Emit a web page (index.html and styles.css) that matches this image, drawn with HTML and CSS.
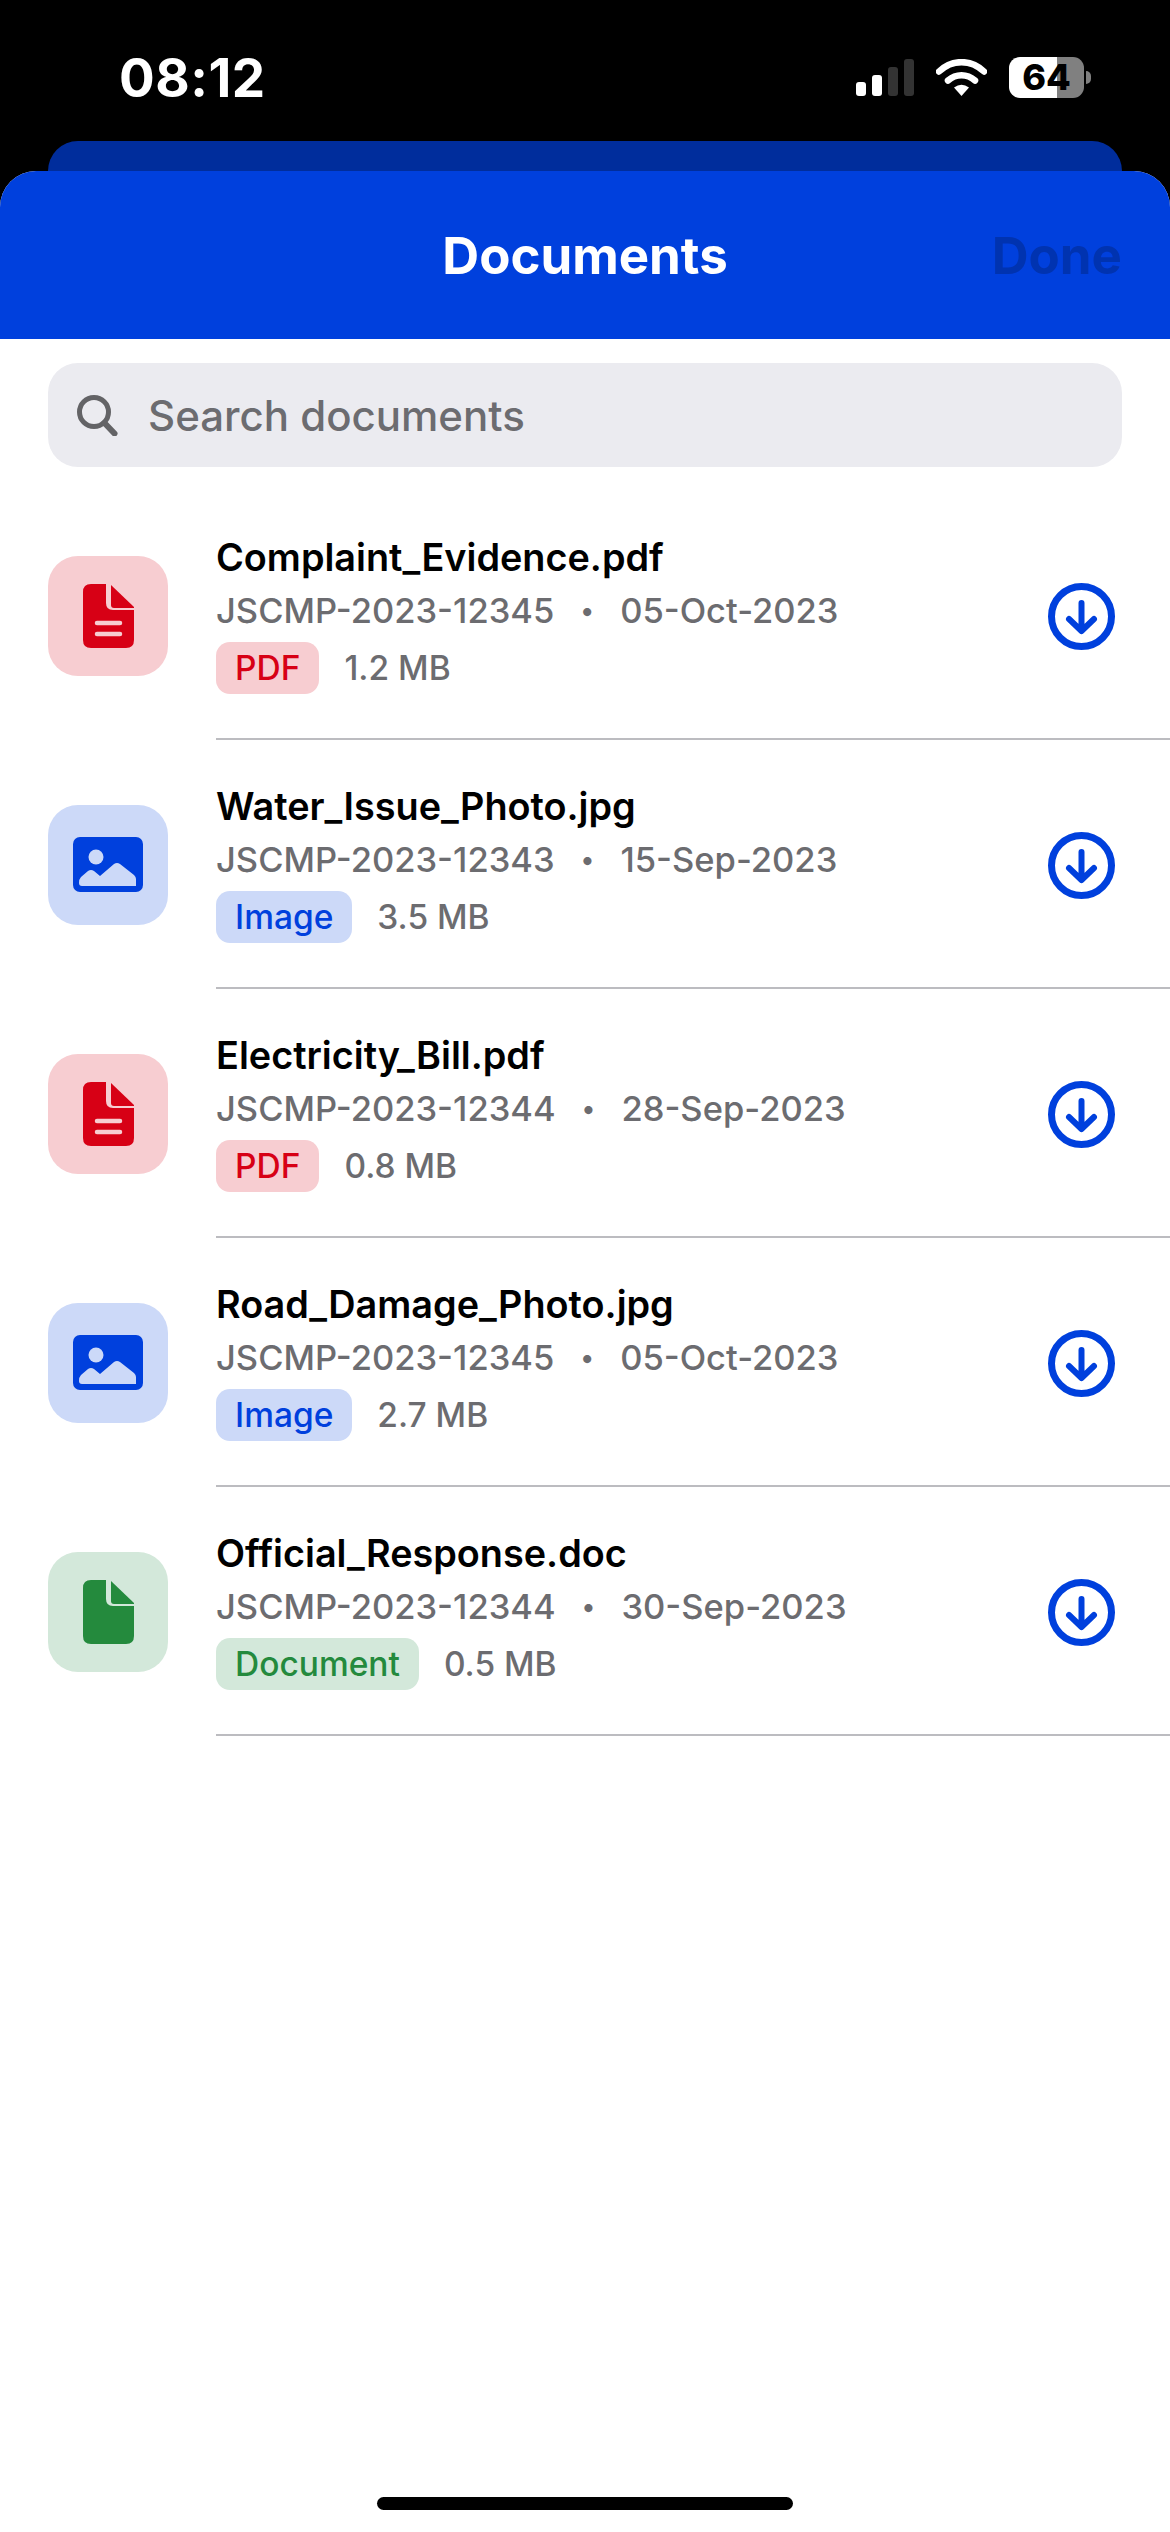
FILE: index.html
```html
<!DOCTYPE html>
<html lang="en">
<head>
    <meta charset="UTF-8">
    <meta name="viewport" content="width=device-width, initial-scale=1.0">
    <title>Documents</title>
    <link rel="stylesheet" href="styles.css">
</head>
<body>

    <!-- Status bar -->
    <div class="status-bar">
        <span class="time">08:12</span>
        <div class="status-icons">
            <div class="signal">
                <span class="bar bar-1"></span>
                <span class="bar bar-2"></span>
                <span class="bar bar-3"></span>
                <span class="bar bar-4"></span>
            </div>
            <svg class="wifi" viewBox="0 0 51 37">
                <path d="M3 12.5C16 0 35 0 48 12.5" fill="none" stroke="#fff" stroke-width="6.5" stroke-linecap="round"/>
                <path d="M12 21.5C20 14.5 31 14.5 39 21.5" fill="none" stroke="#fff" stroke-width="6.5" stroke-linecap="round"/>
                <path d="M18 28.5Q25.500 23 33 28.5L25.500 37Z" fill="#fff"/>
            </svg>
            <div class="battery"><span>64</span></div>
            <span class="battery-nub"></span>
        </div>
    </div>

    <div class="back-sheet"></div>

    <div class="sheet">
        <header>
            <h1>Documents</h1>
            <a href="#" class="done">Done</a>
        </header>

        <main>
            <div class="search">
                <svg class="search-icon" viewBox="0 0 41 41">
                    <circle cx="17" cy="17" r="14.500" fill="none" stroke="#636366" stroke-width="5"/>
                    <path d="M27.500 28L37.500 38.500" fill="none" stroke="#636366" stroke-width="6" stroke-linecap="round"/>
                </svg>
                <span>Search documents</span>
            </div>

            <div class="doc-list">
                <!-- Complaint evidence -->
                <div class="doc">
                    <div class="doc-icon pdf">
                        <svg class="file-icon" viewBox="0 0 51 64">
                            <path d="M8 0H23V19Q23 26 30 26H51V56Q51 64 43 64H8Q0 64 0 56V8Q0 0 8 0Z" fill="#d70015"/>
                            <path d="M28 1L51 23V24H31Q28 24 28 21Z" fill="#d70015"/>
                            <path d="M14 39H37M14 50H37" stroke="#f7cdd1" stroke-width="4.500" stroke-linecap="round"/>
                        </svg>
                    </div>
                    <div class="doc-info">
                        <div class="doc-name">Complaint_Evidence.pdf</div>
                        <div class="doc-meta"><span>JSCMP-2023-12345</span><span class="dot">•</span><span>05-Oct-2023</span></div>
                        <div class="doc-tags"><span class="tag pdf">PDF</span><span>1.2 MB</span></div>
                    </div>
                    <svg class="download" viewBox="0 0 67 67">
                        <circle cx="33.500" cy="33.500" r="30" fill="none" stroke="#0040dd" stroke-width="7"/>
                        <path d="M33.500 20V47M21 36L33.500 48L46 36" fill="none" stroke="#0040dd" stroke-width="6" stroke-linecap="round" stroke-linejoin="round"/>
                    </svg>
                </div>

                <!-- Water issue -->
                <div class="doc">
                    <div class="doc-icon image">
                        <svg class="photo-icon" viewBox="0 0 70 55">
                            <rect width="70" height="55" rx="7" fill="#0040dd"/>
                            <circle cx="23" cy="20" r="7.500" fill="#ccd9f8"/>
                            <path d="M6 46Q6 42 8 40L15 34Q18 32 21 34L27 39L41 27Q44 25 47 27L61 38Q63 40 63 42V49H9Q6 49 6 46Z" fill="#ccd9f8"/>
                        </svg>
                    </div>
                    <div class="doc-info">
                        <div class="doc-name">Water_Issue_Photo.jpg</div>
                        <div class="doc-meta"><span>JSCMP-2023-12343</span><span class="dot">•</span><span>15-Sep-2023</span></div>
                        <div class="doc-tags"><span class="tag image">Image</span><span>3.5 MB</span></div>
                    </div>
                    <svg class="download" viewBox="0 0 67 67">
                        <circle cx="33.500" cy="33.500" r="30" fill="none" stroke="#0040dd" stroke-width="7"/>
                        <path d="M33.500 20V47M21 36L33.500 48L46 36" fill="none" stroke="#0040dd" stroke-width="6" stroke-linecap="round" stroke-linejoin="round"/>
                    </svg>
                </div>

                <!-- Electricity bill -->
                <div class="doc">
                    <div class="doc-icon pdf">
                        <svg class="file-icon" viewBox="0 0 51 64">
                            <path d="M8 0H23V19Q23 26 30 26H51V56Q51 64 43 64H8Q0 64 0 56V8Q0 0 8 0Z" fill="#d70015"/>
                            <path d="M28 1L51 23V24H31Q28 24 28 21Z" fill="#d70015"/>
                            <path d="M14 39H37M14 50H37" stroke="#f7cdd1" stroke-width="4.500" stroke-linecap="round"/>
                        </svg>
                    </div>
                    <div class="doc-info">
                        <div class="doc-name">Electricity_Bill.pdf</div>
                        <div class="doc-meta"><span>JSCMP-2023-12344</span><span class="dot">•</span><span>28-Sep-2023</span></div>
                        <div class="doc-tags"><span class="tag pdf">PDF</span><span>0.8 MB</span></div>
                    </div>
                    <svg class="download" viewBox="0 0 67 67">
                        <circle cx="33.500" cy="33.500" r="30" fill="none" stroke="#0040dd" stroke-width="7"/>
                        <path d="M33.500 20V47M21 36L33.500 48L46 36" fill="none" stroke="#0040dd" stroke-width="6" stroke-linecap="round" stroke-linejoin="round"/>
                    </svg>
                </div>

                <!-- Road damage -->
                <div class="doc">
                    <div class="doc-icon image">
                        <svg class="photo-icon" viewBox="0 0 70 55">
                            <rect width="70" height="55" rx="7" fill="#0040dd"/>
                            <circle cx="23" cy="20" r="7.500" fill="#ccd9f8"/>
                            <path d="M6 46Q6 42 8 40L15 34Q18 32 21 34L27 39L41 27Q44 25 47 27L61 38Q63 40 63 42V49H9Q6 49 6 46Z" fill="#ccd9f8"/>
                        </svg>
                    </div>
                    <div class="doc-info">
                        <div class="doc-name">Road_Damage_Photo.jpg</div>
                        <div class="doc-meta"><span>JSCMP-2023-12345</span><span class="dot">•</span><span>05-Oct-2023</span></div>
                        <div class="doc-tags"><span class="tag image">Image</span><span>2.7 MB</span></div>
                    </div>
                    <svg class="download" viewBox="0 0 67 67">
                        <circle cx="33.500" cy="33.500" r="30" fill="none" stroke="#0040dd" stroke-width="7"/>
                        <path d="M33.500 20V47M21 36L33.500 48L46 36" fill="none" stroke="#0040dd" stroke-width="6" stroke-linecap="round" stroke-linejoin="round"/>
                    </svg>
                </div>

                <!-- Official response -->
                <div class="doc">
                    <div class="doc-icon word">
                        <svg class="file-icon" viewBox="0 0 51 64">
                            <path d="M8 0H23V19Q23 26 30 26H51V56Q51 64 43 64H8Q0 64 0 56V8Q0 0 8 0Z" fill="#248a3d"/>
                            <path d="M28 1L51 23V24H31Q28 24 28 21Z" fill="#248a3d"/>
                        </svg>
                    </div>
                    <div class="doc-info">
                        <div class="doc-name">Official_Response.doc</div>
                        <div class="doc-meta"><span>JSCMP-2023-12344</span><span class="dot">•</span><span>30-Sep-2023</span></div>
                        <div class="doc-tags"><span class="tag word">Document</span><span>0.5 MB</span></div>
                    </div>
                    <svg class="download" viewBox="0 0 67 67">
                        <circle cx="33.500" cy="33.500" r="30" fill="none" stroke="#0040dd" stroke-width="7"/>
                        <path d="M33.500 20V47M21 36L33.500 48L46 36" fill="none" stroke="#0040dd" stroke-width="6" stroke-linecap="round" stroke-linejoin="round"/>
                    </svg>
                </div>
            </div>
        </main>

        <div class="home-bar"></div>
    </div>

</body>
</html>
```

FILE: styles.css
```css
/* General Styles */
html, body {
    height: 100%;
    margin: 0;
}

body {
    display: flex;
    flex-direction: column;
    background-color: #000;
    font-family: 'Inter', 'Liberation Sans', sans-serif;
    overflow: hidden;
}

/* Status Bar */
.status-bar {
    height: 141px;
    box-sizing: border-box;
    padding: 49px 79px 0 119px;
    display: flex;
    justify-content: space-between;
    align-items: flex-start;
    color: #fff;
}

.time {
    font-size: 53px;
    line-height: 58px;
    font-weight: 700;
    letter-spacing: 0.5px;
}

.status-icons {
    display: flex;
    align-items: flex-start;
    padding-top: 8px;
}

.signal {
    display: flex;
    align-items: flex-end;
    gap: 6px;
    height: 37px;
    margin-top: 2px;
    margin-right: 22px;
}

.bar {
    width: 10px;
    border-radius: 3px;
    background-color: #fff;
}

.bar-1 { height: 14px; }
.bar-2 { height: 21px; }
.bar-3 { height: 29px; background-color: #333; }
.bar-4 { height: 37px; background-color: #333; }

.wifi {
    width: 51px;
    height: 37px;
    margin-top: 2px;
    margin-right: 22px;
}

.battery {
    width: 75px;
    height: 41px;
    border-radius: 11px;
    background: linear-gradient(to right, #fff 64%, #808080 64%);
    color: #000;
    font-size: 36px;
    font-weight: 800;
    line-height: 41px;
    text-align: center;
}

.battery-nub {
    width: 5px;
    height: 13px;
    margin: 14px 0 0 2px;
    border-radius: 0 6px 6px 0;
    background-color: #808080;
}

/* Sheets */
.back-sheet {
    height: 30px;
    margin: 0 48px;
    flex-shrink: 0;
    border-radius: 30px 30px 0 0;
    background-color: #002d9c;
}

.sheet {
    flex: 1;
    display: flex;
    flex-direction: column;
    background-color: #fff;
    border-radius: 36px 36px 0 0;
}

header {
    height: 168px;
    flex-shrink: 0;
    box-sizing: border-box;
    padding: 0 48px;
    display: flex;
    align-items: center;
    justify-content: flex-end;
    position: relative;
    background-color: #0040dd;
    border-radius: 36px 36px 0 0;
}

h1 {
    position: absolute;
    left: 0;
    right: 0;
    margin: 0;
    color: #fff;
    font-size: 51px;
    font-weight: 700;
    text-align: center;
}

.done {
    color: #0033b0;
    font-size: 51px;
    font-weight: 700;
    text-decoration: none;
}

/* Search */
main {
    flex: 1;
    padding-top: 24px;
}

.search {
    height: 104px;
    margin: 0 48px;
    padding-left: 29px;
    display: flex;
    align-items: center;
    gap: 30px;
    border-radius: 30px;
    background-color: #ebebf0;
    color: #6c6c70;
    font-size: 42px;
    font-weight: 500;
}

.search-icon {
    width: 41px;
    height: 41px;
}

/* Document Rows */
.doc-list {
    margin-top: 24px;
}

.doc {
    height: 249px;
    box-sizing: border-box;
    padding-left: 48px;
    display: flex;
    align-items: center;
}

.doc-icon {
    width: 120px;
    height: 120px;
    flex-shrink: 0;
    display: flex;
    align-items: center;
    justify-content: center;
    border-radius: 30px;
}

.doc-icon.pdf, .tag.pdf {
    background-color: #f7cdd1;
}

.doc-icon.image, .tag.image {
    background-color: #ccd9f8;
}

.doc-icon.word, .tag.word {
    background-color: #d3e8da;
}

.file-icon {
    width: 51px;
    height: 64px;
}

.photo-icon {
    width: 70px;
    height: 55px;
}

.doc-info {
    align-self: stretch;
    flex: 1;
    margin-left: 48px;
    padding-top: 42px;
    box-sizing: border-box;
    border-bottom: 2px solid #bcbcc0;
}

.doc-name {
    color: #000;
    font-size: 37.8px;
    line-height: 48px;
    font-weight: 600;
}

.doc-meta {
    margin-top: 6px;
    display: flex;
    align-items: center;
    color: #6c6c70;
    font-size: 34.5px;
    line-height: 48px;
    font-weight: 500;
}

.dot {
    margin: 0 26px;
    font-size: 26px;
}

.doc-tags {
    margin-top: 7px;
    display: flex;
    align-items: center;
    gap: 25px;
    color: #6c6c70;
    font-size: 33.5px;
    font-weight: 500;
}

.tag {
    height: 52px;
    padding: 0 19px;
    display: flex;
    align-items: center;
    border-radius: 14px;
}

.tag.pdf {
    color: #d70015;
}

.tag.image {
    color: #0040dd;
}

.tag.word {
    color: #248a3d;
}

.download {
    position: absolute;
    right: 55px;
    width: 67px;
    height: 67px;
    margin-top: 2px;
}

/* Home Indicator */
.home-bar {
    width: 416px;
    height: 13px;
    margin: 0 auto 22px;
    flex-shrink: 0;
    border-radius: 7px;
    background-color: #000;
}
```
